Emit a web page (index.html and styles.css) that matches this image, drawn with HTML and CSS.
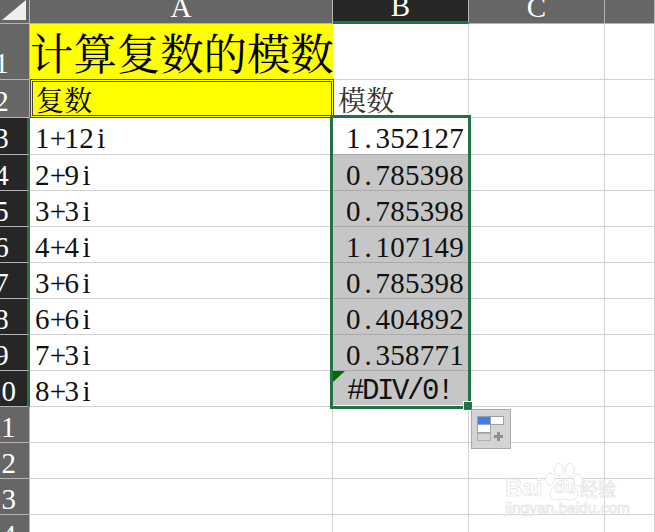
FILE: index.html
```html
<!DOCTYPE html>
<html lang="zh-CN">
<head>
<meta charset="utf-8">
<title>计算复数的模数</title>
<link rel="stylesheet" href="styles.css">
</head>
<body>
<div class="sheet">
  <div class="corner"></div>
  <div class="ch">A</div>
  <div class="ch ch-on">B</div>
  <div class="ch">C</div>
  <div class="ch"></div>

  <div class="rh upper">1</div>
  <div class="cell title">计算复数的模数</div>
  <div class="cell"></div><div class="cell"></div><div class="cell"></div>

  <div class="rh upper">2</div>
  <div class="cell head"><span>复数</span></div>
  <div class="cell cjk"><span>模数</span></div>
  <div class="cell"></div><div class="cell"></div>

  <div class="rh rh-on upper">3</div>
  <div class="cell upper"><span>1<i class="p">+</i>12<i class="d">i</i></span></div>
  <div class="cell num first upper"><span>1<i class="d">.</i>352127</span></div>
  <div class="cell"></div><div class="cell"></div>

  <div class="rh rh-on">4</div>
  <div class="cell"><span>2<i class="p">+</i>9<i class="d">i</i></span></div>
  <div class="cell num sel"><span>0<i class="d">.</i>785398</span></div>
  <div class="cell"></div><div class="cell"></div>

  <div class="rh rh-on">5</div>
  <div class="cell"><span>3<i class="p">+</i>3<i class="d">i</i></span></div>
  <div class="cell num sel"><span>0<i class="d">.</i>785398</span></div>
  <div class="cell"></div><div class="cell"></div>

  <div class="rh rh-on">6</div>
  <div class="cell"><span>4<i class="p">+</i>4<i class="d">i</i></span></div>
  <div class="cell num sel"><span>1<i class="d">.</i>107149</span></div>
  <div class="cell"></div><div class="cell"></div>

  <div class="rh rh-on">7</div>
  <div class="cell"><span>3<i class="p">+</i>6<i class="d">i</i></span></div>
  <div class="cell num sel"><span>0<i class="d">.</i>785398</span></div>
  <div class="cell"></div><div class="cell"></div>

  <div class="rh rh-on">8</div>
  <div class="cell"><span>6<i class="p">+</i>6<i class="d">i</i></span></div>
  <div class="cell num sel"><span>0<i class="d">.</i>404892</span></div>
  <div class="cell"></div><div class="cell"></div>

  <div class="rh rh-on">9</div>
  <div class="cell"><span>7<i class="p">+</i>3<i class="d">i</i></span></div>
  <div class="cell num sel"><span>0<i class="d">.</i>358771</span></div>
  <div class="cell"></div><div class="cell"></div>

  <div class="rh rh-on">10</div>
  <div class="cell"><span>8<i class="p">+</i>3<i class="d">i</i></span></div>
  <div class="cell sel err"><span>#DIV/0!</span></div>
  <div class="cell"></div><div class="cell"></div>

  <div class="rh">11</div>
  <div class="cell"></div><div class="cell"></div><div class="cell"></div><div class="cell"></div>
  <div class="rh">12</div>
  <div class="cell"></div><div class="cell"></div><div class="cell"></div><div class="cell"></div>
  <div class="rh">13</div>
  <div class="cell"></div><div class="cell"></div><div class="cell"></div><div class="cell"></div>
  <div class="rh">14</div>
  <div class="cell"></div><div class="cell"></div><div class="cell"></div><div class="cell"></div>

  <div class="frame"></div>
  <div class="handle"></div>

  <div class="paste">
    <svg class="paste-icon" width="30" height="28" viewBox="0 0 30 28">
      <rect x="0.5" y="0.5" width="13" height="8" fill="#3c7df2" stroke="#a0a0a0"/>
      <rect x="13.5" y="0.5" width="13" height="8" fill="#fff" stroke="#a0a0a0"/>
      <rect x="0.5" y="8.5" width="13" height="8" fill="#fff" stroke="#a0a0a0"/>
      <rect x="0.5" y="17.5" width="13" height="7" fill="none" stroke="#8c8c8c" stroke-dasharray="1 1"/>
      <path d="M20 16h3v3h3v3h-3v3h-3v-3h-3v-3h3z" fill="#8f8f8f"/>
    </svg>
  </div>

  <div class="mark">
    <svg class="paw" width="44" height="44" viewBox="0 0 44 44">
      <g fill="#fff" stroke="#e6e6e6" stroke-width="1">
        <ellipse cx="8" cy="17" rx="4.5" ry="6"/>
        <ellipse cx="17" cy="8" rx="4.5" ry="6.5"/>
        <ellipse cx="28" cy="8" rx="4.5" ry="6.5"/>
        <ellipse cx="36" cy="18" rx="4.5" ry="6"/>
        <path d="M22 18c6 0 8 5 12 9 4 5 1 11-5 11-3 0-5-1-7-1s-5 1-8 1c-6 0-8-6-4-11 4-4 6-9 12-9z"/>
      </g>
    </svg>
    <div class="mark-top"><span class="bai">Bai</span><span class="du">du</span><span class="jy">经验</span></div>
    <div class="mark-url">jingyan.baidu.com</div>
  </div>
</div>
</body>
</html>
```
FILE: styles.css
```css
* { box-sizing: border-box; }
html, body { margin: 0; background: #fff; }
.sheet {
  position: relative;
  width: 655px;
  height: 532px;
  overflow: hidden;
  display: grid;
  grid-template-columns: 30px 303px 136px 136px 50px;
  grid-template-rows: 24px 56px 38px 37px repeat(10, 36px) 36px;
  font-family: "Liberation Serif", "Noto Serif CJK SC", "Noto Sans CJK SC", serif;
  font-size: 29px;
  line-height: 30px;
  color: #111;
}
i { font-style: normal; }
.corner {
  position: relative;
  background: #666;
  border-right: 1px solid #b5b5b5;
  border-bottom: 1px solid #b5b5b5;
}
.corner::after {
  content: "";
  position: absolute;
  left: 2px;
  top: 0;
  width: 24px;
  height: 20px;
  background: #eee;
  clip-path: polygon(100% 0, 100% 100%, 0 100%);
}
.ch {
  display: flex;
  align-items: flex-end;
  justify-content: center;
  background: #666;
  color: #fff;
  line-height: 32px;
  border-right: 1px solid #b5b5b5;
  border-bottom: 1px solid #b5b5b5;
}
.ch-on {
  background: #262626;
  border-bottom: 3px solid #217346;
  line-height: 30px;
}
.rh {
  display: flex;
  align-items: flex-end;
  justify-content: center;
  padding-right: 26px;
  background: #666;
  color: #fff;
  border-right: 1px solid #b5b5b5;
  border-bottom: 1px solid #b5b5b5;
  white-space: nowrap;
}
.rh-on {
  background: #262626;
  border-right: 3px solid #217346;
  padding-right: 24px;
}
.cell {
  position: relative;
  display: flex;
  align-items: flex-end;
  padding-left: 5px;
  border-right: 1px solid #d2d2d2;
  border-bottom: 1px solid #d2d2d2;
  white-space: nowrap;
  letter-spacing: 0.25px;
}
.upper { line-height: 32px; }
.cell .p { letter-spacing: -1.6px; }
.cell .d { display: inline-block; width: 14.75px; text-align: center; }
.title {
  padding-left: 0;
  background: #ff0;
  border-right-color: #ff0;
  font-size: 43.4px;
  line-height: 56px;
  letter-spacing: 0;
  color: #000;
  font-family: "Noto Serif CJK SC", "Noto Sans CJK SC", sans-serif;
}
.head {
  margin: -1px -1px 0 0;
  background: #ff0;
  border: 1px solid #444;
  box-shadow: inset 0 0 0 1px #ff0, inset 0 0 0 2px #444;
  font-family: "Noto Serif CJK SC", "Noto Sans CJK SC", sans-serif;
  font-size: 28px;
  color: #000;
  line-height: 36px;
}
.cjk {
  font-family: "Noto Serif CJK SC", "Noto Sans CJK SC", sans-serif;
  font-size: 28px;
  line-height: 36px;
  color: #333;
}
.num { justify-content: flex-end; padding-right: 4px; }
.first { border-bottom-color: #aaa; }
.sel {
  background: #c6c6c6;
  border-bottom-color: #aaa;
}
.err {
  justify-content: center;
  padding: 0 2px 0 0;
  font-family: "Liberation Mono", monospace;
  line-height: 28px;
  letter-spacing: -2.4px;
}
.err::before {
  content: "";
  position: absolute;
  left: 0;
  top: 0;
  width: 12px;
  height: 11px;
  background: #006b00;
  clip-path: polygon(0 0, 100% 0, 0 100%);
}
.frame {
  position: absolute;
  left: 330px;
  top: 115px;
  width: 141px;
  height: 294px;
  border: 3px solid #217346;
  box-shadow: inset 0 -1px 0 #fff;
}
.handle {
  position: absolute;
  left: 463px;
  top: 401px;
  width: 10px;
  height: 10px;
  background: #217346;
  border: 1px solid #fff;
}
.paste {
  position: absolute;
  left: 471px;
  top: 409px;
  width: 40px;
  height: 40px;
  background: #d4d4d4;
  border: 1px solid #a9a9a9;
  padding: 6px 0 0 5px;
}
.paste-icon { display: block; }
.mark {
  position: absolute;
  left: 505px;
  top: 462px;
  width: 115px;
  height: 56px;
  font-family: "Liberation Sans", sans-serif;
  color: #fff;
  -webkit-text-stroke: 0.7px #e2e2e2;
}
.paw { position: absolute; left: 37px; top: 0; }
.mark-top {
  position: absolute;
  left: 0;
  top: 14px;
  display: flex;
  align-items: center;
  height: 24px;
  line-height: 24px;
}
.bai { font-size: 24px; font-weight: 700; width: 45px; }
.du { font-size: 17px; font-weight: 700; width: 30px; text-align: center; }
.jy { font-size: 18px; font-family: "Noto Sans CJK SC", sans-serif; }
.mark-url {
  position: absolute;
  left: 0;
  top: 38px;
  font-size: 15.5px;
  line-height: 16px;
  white-space: nowrap;
}
```
